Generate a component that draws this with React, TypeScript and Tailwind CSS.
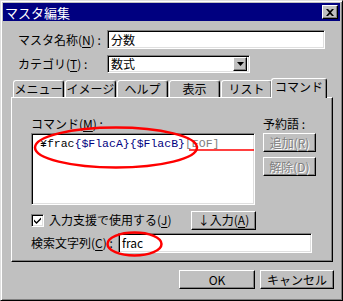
import React from "react";

const sunken =
  "border border-t-[#808080] border-l-[#808080] border-r-white border-b-white shadow-[inset_1px_1px_0_#000,inset_-1px_-1px_0_#dfdfdf]";
const raised =
  "border border-t-white border-l-white border-r-black border-b-black shadow-[inset_-1px_-1px_0_#808080]";

const U: React.FC<{ children: React.ReactNode }> = ({ children }) => (
  <span className="underline underline-offset-2">{children}</span>
);

const Button: React.FC<{
  w: string;
  disabled?: boolean;
  children: React.ReactNode;
}> = ({ w, disabled, children }) => (
  <div
    className={`${w} h-[19px] bg-[#c0c0c0] ${raised} flex items-center justify-center text-[12px] leading-none ${
      disabled
        ? "text-[#808080] [text-shadow:1px_1px_0_#fff]"
        : "text-black"
    }`}
  >
    {children}
  </div>
);

const App: React.FC = () => {
  const tabs = ["メニュー", "イメージ", "ヘルプ", "表示", "リスト"];

  return (
    <div
      className="relative w-[343px] h-[301px] bg-[#c0c0c0] border border-t-[#dfdfdf] border-l-[#dfdfdf] border-r-black border-b-black shadow-[inset_1px_1px_0_#fff,inset_-1px_-1px_0_#808080] p-[2px] text-black select-none"
      style={{ fontFamily: '"Noto Sans CJK JP", "Noto Sans", sans-serif' }}
    >
      {/* title bar */}
      <div className="h-[18px] bg-[#000080] flex items-center justify-between pl-[2px] pr-[2px]">
        <span className="text-white text-[13px] leading-none">マスタ編集</span>
        <div className={`w-[16px] h-[14px] bg-[#c0c0c0] ${raised} flex items-center justify-center`}>
          <svg width="8" height="7" viewBox="0 0 8 7">
            <path d="M0 0h2l2 2 2-2h2L5 3.5 8 7H6L4 5 2 7H0l3-3.5z" fill="#000" />
          </svg>
        </div>
      </div>

      {/* fields */}
      <div className="pl-[15px]">
        <div className="mt-[9px] flex items-center h-[19px]">
          <span className="w-[89px] text-[12px] leading-none">
            マスタ名称(<U>N</U>) :
          </span>
          <div className={`w-[218px] h-[19px] bg-white ${sunken} flex items-center pl-[3px] text-[12px] leading-none`}>
            分数
          </div>
        </div>
        <div className="mt-[6px] flex items-center h-[18px]">
          <span className="w-[89px] text-[12px] leading-none">
            カテゴリ(<U>T</U>) :
          </span>
          <div className={`w-[143px] h-[18px] bg-white ${sunken} flex items-center justify-between pl-[3px] pr-[2px] text-[12px] leading-none`}>
            <span>数式</span>
            <div className={`w-[14px] h-[14px] bg-[#c0c0c0] ${raised} flex items-center justify-center`}>
              <svg width="7" height="4" viewBox="0 0 7 4">
                <path d="M0 0h7L3.5 4z" fill="#000" />
              </svg>
            </div>
          </div>
        </div>
      </div>

      {/* tabs */}
      <div className="mt-[5px] ml-[8px] h-[19px] flex items-end">
        <div className="ml-[2px] flex items-end gap-[1px]">
          {tabs.map((t) => (
            <div
              key={t}
              className="w-[51px] h-[17px] border-l border-t border-r border-l-white border-t-white border-r-black rounded-t-[3px] shadow-[inset_-1px_0_0_#808080] flex items-center justify-center text-[12px] leading-none"
            >
              {t}
            </div>
          ))}
        </div>
        <div className="relative z-10 -ml-[1px] -mb-[1px] w-[56px] h-[20px] bg-[#c0c0c0] border-l border-t border-r border-l-white border-t-white border-r-black rounded-t-[3px] shadow-[inset_-1px_0_0_#808080] flex items-start pt-[2px] justify-center text-[12px] leading-none">
          コマンド
        </div>
      </div>

      {/* panel */}
      <div className="ml-[8px] w-[322px] h-[165px] border border-t-white border-l-white border-r-black border-b-black shadow-[inset_-1px_-1px_0_#808080] pl-[19px] pt-[18px]">
        <div className="flex">
          <div className="w-[224px]">
            <div className="h-[15px] text-[12px] leading-[15px]">
              コマンド(<U>M</U>) :
            </div>
            <div className={`mt-[2px] w-[224px] h-[72px] bg-white ${sunken} pl-[8px] pt-[3px]`}>
              <div
                className="text-[11.5px] leading-[14px] whitespace-pre"
                style={{ fontFamily: '"Liberation Mono", monospace' }}
              >
                <span className="text-black">¥frac</span>
                <span className="text-[#000080]">{"{$FlacA}{$FlacB}"}</span>
                <span className="text-[#808080]">[EOF]</span>
              </div>
            </div>
          </div>
          <div className="ml-[8px] w-[53px]">
            <div className="h-[15px] text-[12px] leading-[15px]">予約語 :</div>
            <div className="mt-[2px] flex flex-col gap-[5px]">
              <Button w="w-[53px]" disabled>
                追加(R)
              </Button>
              <Button w="w-[53px]" disabled>
                解除(D)
              </Button>
            </div>
          </div>
        </div>

        <div className="mt-[6px] w-[225px] h-[18px] flex items-center">
          <div className={`w-[13px] h-[13px] bg-white ${sunken} flex items-center justify-center`}>
            <svg width="7" height="7" viewBox="0 0 7 7">
              <path d="M0 2.5l2.5 2.5L7 0.5v2L2.5 7 0 4.5z" fill="#000" />
            </svg>
          </div>
          <span className="ml-[5px] text-[12px] leading-none">
            入力支援で使用する(<U>J</U>)
          </span>
          <div className="ml-auto">
            <Button w="w-[65px]">
              ↓入力(<U>A</U>)
            </Button>
          </div>
        </div>

        <div className="mt-[4px] h-[20px] flex items-center">
          <span className="w-[87px] text-[12px] leading-none">
            検索文字列(<U>C</U>) :
          </span>
          <div className={`w-[194px] h-[20px] bg-white ${sunken} flex items-center pl-[3px] text-[12px] leading-none`}>
            frac
          </div>
        </div>
      </div>

      {/* bottom buttons */}
      <div className="mt-[8px] pr-[6px] flex justify-end gap-[5px]">
        <Button w="w-[76px]">OK</Button>
        <Button w="w-[74px]">キャンセル</Button>
      </div>

      {/* red annotations */}
      <svg
        className="absolute left-[-1px] top-[-1px] pointer-events-none"
        width="343"
        height="301"
        viewBox="0 0 343 301"
      >
        <line x1="189" y1="150" x2="254" y2="150" stroke="#ff0000" strokeWidth="1.5" />
        <ellipse cx="116" cy="147.5" rx="81" ry="20" fill="none" stroke="#ff0000" strokeWidth="2.5" />
        <ellipse cx="134.5" cy="244" rx="27" ry="11.5" fill="none" stroke="#ff0000" strokeWidth="2.5" />
      </svg>
    </div>
  );
};

export default App;
